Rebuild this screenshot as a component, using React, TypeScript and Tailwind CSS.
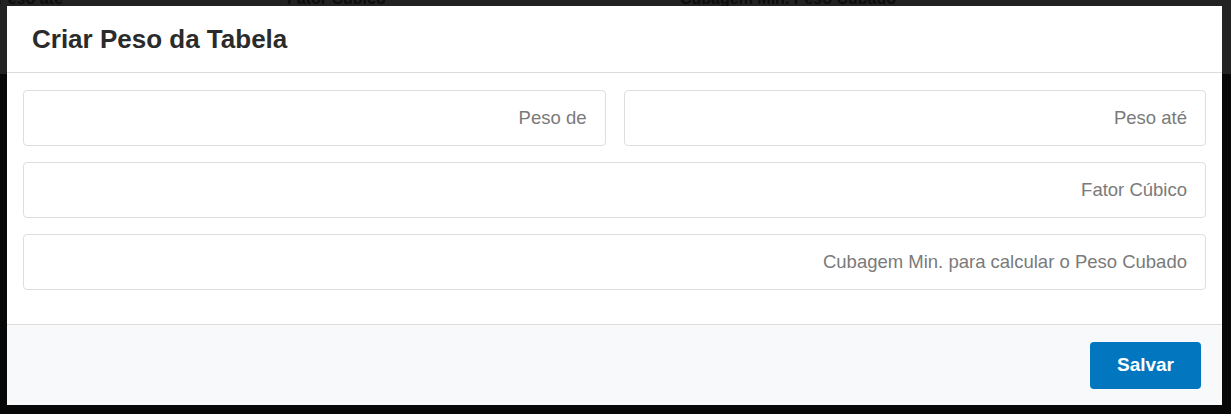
export default function App() {
  return (
    <div className="relative h-[414px] w-[1231px] overflow-hidden bg-[#080808] font-['Liberation_Sans',Arial,sans-serif]">
      {/* page behind the overlay */}
      <div className="h-[74px] bg-[#222222]">
        <div className="relative h-[8px] overflow-hidden text-[16px] font-bold leading-[16px] text-[#0c0c0c]">
          <span className="absolute left-[-3px] top-[-9px]">Peso até</span>
          <span className="absolute left-[287px] top-[-9px]">Fator Cúbico</span>
          <span className="absolute left-[680px] top-[-9px]">Cubagem Min. Peso Cubado</span>
        </div>
      </div>

      {/* modal */}
      <div className="absolute left-[7px] top-[6px] w-[1215px] bg-white">
        <div className="flex h-[67px] items-center border-b border-[#dcdcdc] px-[25px]">
          <h2 className="text-[26px] font-bold leading-none text-[#2b2b2b]">Criar Peso da Tabela</h2>
        </div>
        <div className="flex flex-col gap-[16px] px-[16px] pb-[34px] pt-[17px]">
          <div className="grid grid-cols-2 gap-[18px]">
            <Field placeholder="Peso de" />
            <Field placeholder="Peso até" />
          </div>
          <Field placeholder="Fator Cúbico" />
          <Field placeholder="Cubagem Min. para calcular o Peso Cubado" />
        </div>
        <div className="flex h-[81px] items-start justify-end border-t border-[#dcdcdc] bg-[#f8f9fb] pr-[21px] pt-[17px]">
          <button className="h-[47px] w-[111px] rounded-[4px] bg-[#0277bf] text-[19px] font-bold text-white">
            Salvar
          </button>
        </div>
      </div>
    </div>
  );
}

function Field({ placeholder }: { placeholder: string }) {
  return (
    <input
      placeholder={placeholder}
      className="h-[56px] w-full rounded-[4px] border border-[#dedede] bg-white px-[18px] text-right text-[18.5px] text-[#333] outline-none placeholder:text-[#7a7a7a]"
    />
  );
}
